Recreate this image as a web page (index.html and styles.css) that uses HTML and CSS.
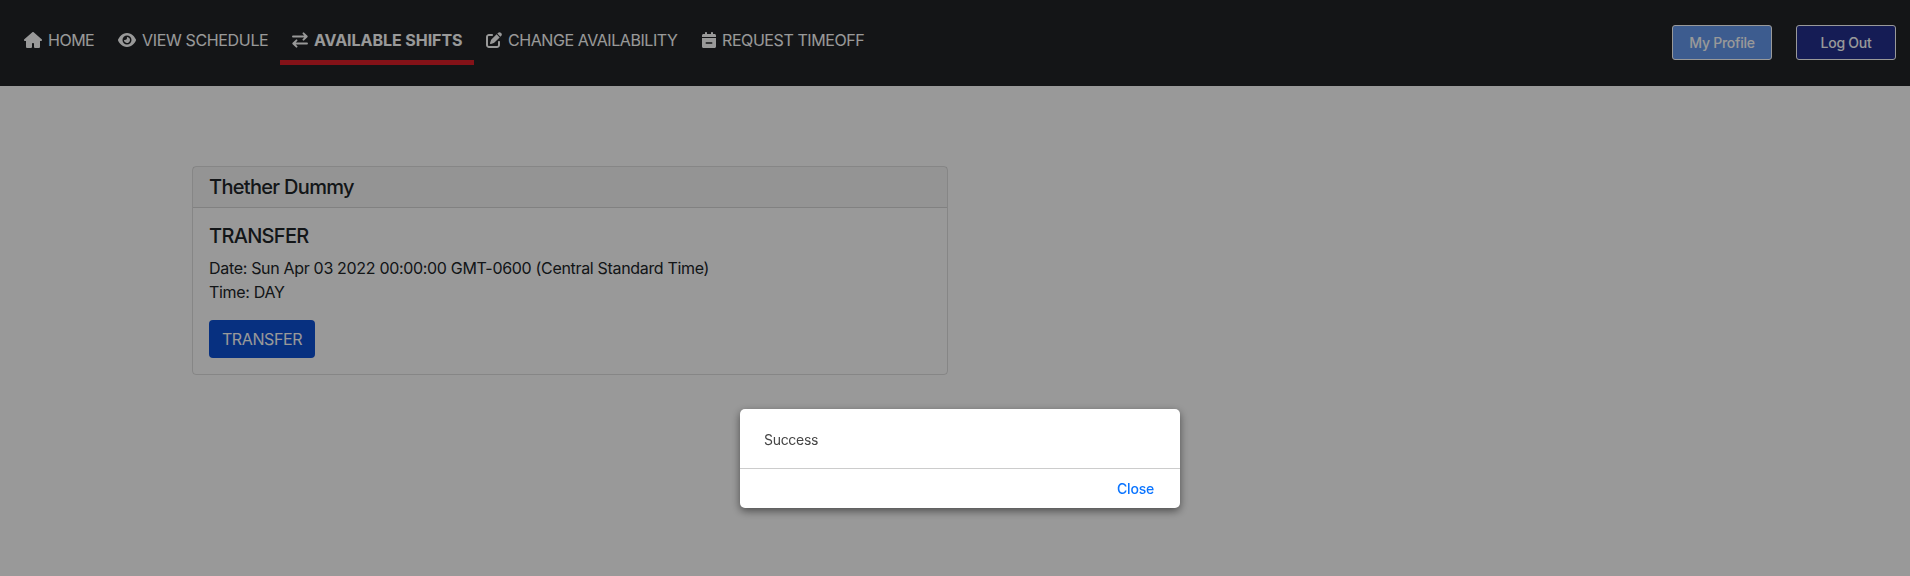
FILE: index.html
```
<!DOCTYPE html>
<html lang="en">
<head>
<meta charset="utf-8">
<title>Available Shifts</title>
<link rel="stylesheet" href="styles.css">
</head>
<body>
<header class="navbar">
  <nav class="nav-links">
    <a class="nav-item home"><svg class="icon" width="18" height="16" viewBox="0 0 576 512"><path d="M575.8 255.5c0 18-15 32.1-32 32.1h-32l.7 160.2c0 2.7-.2 5.4-.5 8.100V472c0 22.100-17.900 40-40 40H360c-22 0-40-18-40-40v-88c0-18-14-32-32-32s-32 14-32 32v88c0 22-18 40-40 40H104c-22 0-40-18-40-40V287.600H32c-18 0-32-14-32-32.100 0-9 3-17 10-24L266.400 8c7-7 15-8 22-8s15 2 21 7l255.400 224.500c8 7 12 15 11 24z"/></svg><span>HOME</span></a>
    <a class="nav-item schedule"><svg class="icon" width="18" height="16" viewBox="0 0 576 512"><path fill-rule="evenodd" d="M288 32c-80.800 0-145.500 36.800-192.600 80.600C48.600 156 17.300 208 2.500 243.700c-3.300 7.900-3.300 16.700 0 24.600C17.300 304 48.600 356 95.400 399.400 142.500 443.200 207.200 480 288 480s145.500-36.800 192.600-80.600c46.800-43.500 78.100-95.400 93-131.100 3.300-7.900 3.300-16.700 0-24.600-14.900-35.700-46.200-87.700-93-131.100C433.500 68.800 368.800 32 288 32zM144 256a144 144 0 1 1 288 0 144 144 0 1 1-288 0zm144-64c0 35.300-28.700 64-64 64-7.100 0-13.900-1.200-20.300-3.300-5.500-1.800-11.900 1.600-11.700 7.400.3 6.900 1.300 13.800 3.200 20.700 13.700 51.200 66.400 81.600 117.600 67.900s81.600-66.400 67.900-117.600c-11.100-41.500-47.800-69.400-88.600-71.100-5.800-.2-9.200 6.100-7.400 11.700 2.100 6.400 3.300 13.200 3.300 20.300z"/></svg><span>VIEW SCHEDULE</span></a>
    <a class="nav-item shifts active"><svg class="icon line" width="16" height="16" viewBox="0 0 16 16"><path d="M1 4.500h13.500M11.500 1.300l3.200 3.200-3.200 3.200M15 11.500H1.500M4.500 8.300l-3.200 3.200 3.200 3.200"/></svg><span>AVAILABLE SHIFTS</span></a>
    <a class="nav-item availability"><svg class="icon" width="16" height="16" viewBox="0 0 512 512"><path d="M471.600 21.700c-21.900-21.900-57.300-21.900-79.200 0L362.300 51.700l97.900 97.900 30.100-30.100c21.900-21.900 21.900-57.300 0-79.200l-18.700-18.600zm-299.200 220c-6.100 6.100-10.800 13.600-13.500 21.900l-29.600 88.800c-2.900 8.600-.6 18.100 5.800 24.600s15.900 8.700 24.600 5.800l88.800-29.600c8.200-2.700 15.700-7.400 21.900-13.500L437.700 172.300 339.700 74.300 172.400 241.700zM96 64C43 64 0 107 0 160v256c0 53 43 96 96 96h256c53 0 96-43 96-96v-96c0-17.700-14.300-32-32-32s-32 14.300-32 32v96c0 17.700-14.300 32-32 32H96c-17.700 0-32-14.300-32-32V160c0-17.700 14.300-32 32-32h96c17.700 0 32-14.300 32-32s-14.300-32-32-32H96z"/></svg><span>CHANGE AVAILABILITY</span></a>
    <a class="nav-item timeoff"><svg class="icon" width="14" height="16" viewBox="0 0 448 512"><path fill-rule="evenodd" d="M128 0c17.700 0 32 14.300 32 32v32h128V32c0-17.700 14.300-32 32-32s32 14.300 32 32v32h48c26.500 0 48 21.500 48 48v48H0v-48c0-26.500 21.500-48 48-48h48V32c0-17.700 14.300-32 32-32zM0 192h448v272c0 26.500-21.500 48-48 48H48c-26.500 0-48-21.500-48-48V192zm312 184c13.300 0 24-10.700 24-24s-10.700-24-24-24H136c-13.300 0-24 10.700-24 24s10.700 24 24 24h176z"/></svg><span>REQUEST TIMEOFF</span></a>
  </nav>
  <div class="actions">
    <button class="nav-btn profile">My Profile</button>
    <button class="nav-btn logout">Log Out</button>
  </div>
</header>
<main class="content">
  <article class="card">
    <h5 class="card-header">Thether Dummy</h5>
    <div class="card-body">
      <h5 class="card-title">TRANSFER</h5>
      <p class="card-text">Date: Sun Apr 03 2022 00:00:00 GMT-0600 (Central Standard Time)<br>Time: DAY</p>
      <button class="btn-primary">TRANSFER</button>
    </div>
  </article>
</main>
<div class="overlay">
  <div class="dialog">
    <div class="dialog-body">Success</div>
    <div class="dialog-footer"><a class="dialog-close">Close</a></div>
  </div>
</div>
</body>
</html>
```
FILE: styles.css
```
* { box-sizing: border-box; }
body { margin: 0; min-height: 576px; background: #fff; color: #212529; font: 400 16px/24px Inter, "Liberation Sans", sans-serif; }
button { font: inherit; letter-spacing: inherit; cursor: pointer; }
.navbar { display: flex; justify-content: space-between; height: 86px; padding: 20px 14px 0 12px; background: #222427; color: #fff; }
.nav-links { display: flex; }
.nav-item { display: flex; align-items: center; gap: 6px; height: 45px; padding: 8px 0 8px 12px; border-bottom: 5px solid transparent; letter-spacing: -.42px; white-space: nowrap; }
.home { width: 94px; letter-spacing: -.5px; }
.schedule { width: 174px; letter-spacing: -.34px; }
.shifts { width: 194px; letter-spacing: -.06px; }
.availability { width: 216px; letter-spacing: -.43px; }
.timeoff { width: 186px; }
.nav-item.active { border-color: #dd1e28; font-weight: 700; }
.icon { flex: none; fill: currentColor; }
.icon.line { fill: none; stroke: currentColor; stroke-width: 1.900; stroke-linecap: round; stroke-linejoin: round; }
.actions { display: flex; gap: 24px; padding-top: 5px; }
.nav-btn { width: 100px; height: 35px; padding: 0; border: 1px solid #fff; border-radius: 3px; color: #fff; font-size: 14px; font-weight: 500; letter-spacing: -.25px; }
.profile { background: #6699ee; }
.logout { background: #232f8e; }
.content { padding: 80px 192px; }
.card { width: 756px; border: 1px solid rgba(0,0,0,.125); border-radius: 4px; }
.card-header, .card-title { margin: 0; font-size: 20px; font-weight: 500; line-height: 24px; letter-spacing: -.68px; }
.card-header { padding: 8px 16px; background: rgba(0,0,0,.03); border-bottom: 1px solid rgba(0,0,0,.125); }
.card-body { padding: 16px; }
.card-title { margin-bottom: 8px; }
.card-text { margin: 0 0 16px; letter-spacing: -.32px; }
.btn-primary { display: block; width: 106px; height: 38px; padding: 0; border: 0; border-radius: 4px; background: #0d50d5; color: #fff; letter-spacing: -.4px; }
.overlay { position: fixed; inset: 0; display: flex; justify-content: center; align-items: flex-start; padding: 409px 0 0 10px; background: rgba(0,0,0,.4); }
.dialog { width: 440px; height: 99px; border-radius: 5px; background: #fff; box-shadow: 0 3px 8px rgba(0,0,0,.5); font-size: 14px; }
.dialog-body { height: 60px; padding: 19px 24px 0; border-bottom: 1px solid #ccc; color: #444; letter-spacing: -.3px; }
.dialog-footer { display: flex; justify-content: flex-end; padding: 8px 26px; }
.dialog-close { color: #0a74ff; font-weight: 500; letter-spacing: -.2px; }
```
